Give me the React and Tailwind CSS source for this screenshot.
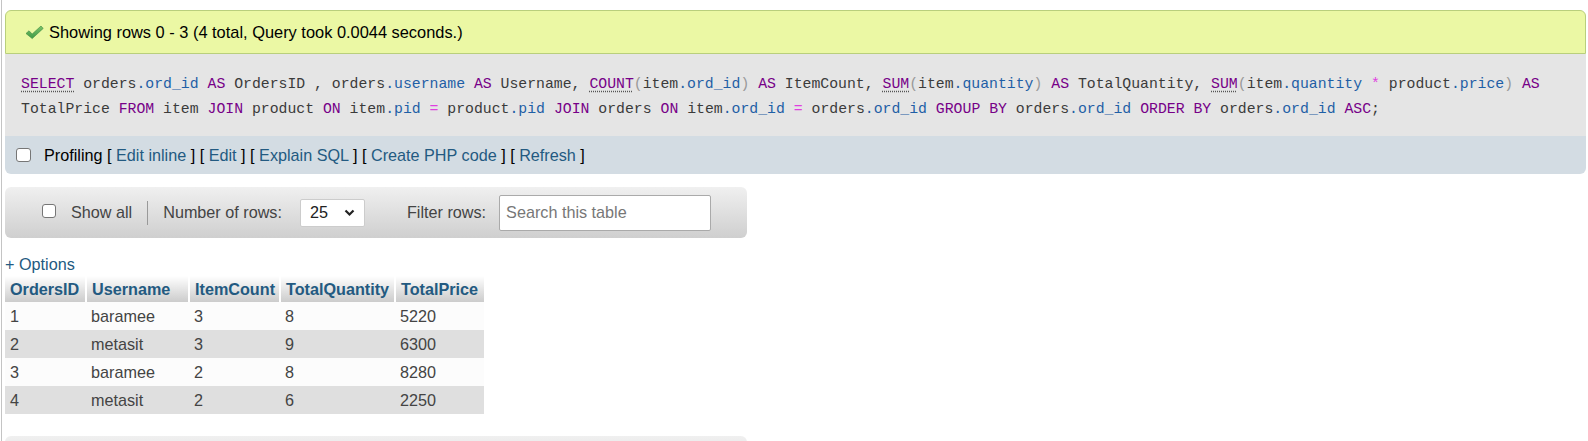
import React from "react";

const K = ({ children, u }) => (
  <span className={"text-[#770088] " + (u ? "underline decoration-dotted decoration-[#555] underline-offset-[3px]" : "")}>
    {children}
  </span>
);
const V = ({ children }) => <span className="text-[#1f5fa6]">{children}</span>;
const P = ({ children }) => <span className="text-[#999]">{children}</span>;
const O = ({ children }) => <span className="text-[#e040e0]">{children}</span>;

function CheckIcon() {
  return (
    <svg width="19" height="16" viewBox="0 0 19 16" className="shrink-0">
      <defs>
        <linearGradient id="chk" x1="0" y1="0" x2="0" y2="1">
          <stop offset="0" stopColor="#7cc46a" />
          <stop offset="1" stopColor="#3f9a45" />
        </linearGradient>
      </defs>
      <path d="M1 9.5 L4 6.8 L7.2 10 L16 2 L18.2 4.4 L7.2 14.6 Z" fill="url(#chk)" stroke="#3b8a40" strokeWidth="0.6" />
    </svg>
  );
}

function Box({ w = 14 }) {
  return <span className="inline-block h-[14px] rounded-[3px] border border-[#767676] bg-white shrink-0" style={{ width: w }} />;
}

const rows = [
  ["1", "baramee", "3", "8", "5220"],
  ["2", "metasit", "3", "9", "6300"],
  ["3", "baramee", "2", "8", "8280"],
  ["4", "metasit", "2", "6", "2250"],
];
const heads = ["OrdersID", "Username", "ItemCount", "TotalQuantity", "TotalPrice"];
const widths = ["w-[81px]", "w-[103px]", "w-[91px]", "w-[115px]", "w-[89px]"];

export default function App() {
  return (
    <div className="min-h-screen bg-white ml-px border-l border-[#c4c4c4] pl-[3px] pt-[10px] text-[16.2px] text-[#333] font-['Liberation_Sans',Arial,sans-serif]">
      {/* result message + query */}
      <div className="mr-[2px]">
        <div className="h-[44px] flex items-center gap-[5px] pl-[19px] bg-[#ebf8a4] border border-[#b9cf7c] rounded-t-[6px] text-black text-[16.4px]">
          <CheckIcon />
          <span>Showing rows 0 - 3 (4 total, Query took 0.0044 seconds.)</span>
        </div>
        <div className="bg-[#e5e5e5] h-[82px] pl-[16px] pt-[18px] font-['Liberation_Mono',monospace] text-[14.8px] leading-[25px] text-[#3b3b3b] whitespace-nowrap">
          <div>
            <K u>SELECT</K> orders<V>.ord_id</V> <K>AS</K> OrdersID , orders<V>.username</V> <K>AS</K> Username,{" "}
            <K u>COUNT</K><P>(</P>item<V>.ord_id</V><P>)</P> <K>AS</K> ItemCount, <K u>SUM</K><P>(</P>item<V>.quantity</V><P>)</P>{" "}
            <K>AS</K> TotalQuantity, <K u>SUM</K><P>(</P>item<V>.quantity</V> <O>*</O> product<V>.price</V><P>)</P> <K>AS</K>
          </div>
          <div>
            TotalPrice <K>FROM</K> item <K>JOIN</K> product <K>ON</K> item<V>.pid</V> <O>=</O> product<V>.pid</V> <K>JOIN</K> orders{" "}
            <K>ON</K> item<V>.ord_id</V> <O>=</O> orders<V>.ord_id</V> <K>GROUP BY</K> orders<V>.ord_id</V> <K>ORDER BY</K>{" "}
            orders<V>.ord_id</V> <K>ASC</K>;
          </div>
        </div>
        <div className="h-[38px] flex items-center pl-[11px] bg-[#d3dce3] rounded-b-[6px] text-black">
          <Box w={15} />
          <span className="ml-[13px]">
            Profiling [ <span className="text-[#235a81]">Edit inline</span> ] [ <span className="text-[#235a81]">Edit</span> ] [{" "}
            <span className="text-[#235a81]">Explain SQL</span> ] [ <span className="text-[#235a81]">Create PHP code</span> ] [{" "}
            <span className="text-[#235a81]">Refresh</span> ]
          </span>
        </div>
      </div>

      {/* navigation */}
      <div className="mt-[13px] w-[742px] h-[51px] rounded-[6px] bg-gradient-to-b from-[#f0f0f0] to-[#cfcfcf] flex items-center text-[#444]">
        <span className="ml-[37px]"><Box w={14} /></span>
        <span className="ml-[15px]">Show all</span>
        <span className="ml-[15px] w-px h-[24px] bg-[#999]" />
        <span className="ml-[15px]">Number of rows:</span>
        <div className="ml-[18px] w-[65px] h-[28px] bg-white border border-[#ccc] rounded-[2px] flex items-center justify-between pl-[9px] pr-[9px] text-[#222]">
          <span>25</span>
          <svg width="11" height="8" viewBox="0 0 11 8">
            <path d="M1.5 1.5 L5.5 5.5 L9.5 1.5" fill="none" stroke="#222" strokeWidth="2.2" />
          </svg>
        </div>
        <span className="ml-[42px]">Filter rows:</span>
        <div className="ml-[13px] w-[212px] h-[36px] bg-white border border-[#aaa] rounded-[2px] flex items-center pl-[6px] text-[#777]">
          Search this table
        </div>
      </div>

      {/* options */}
      <div className="mt-[15px] h-[22px] leading-[22px] text-[#235a81]">+ Options</div>

      <table className="mt-[1px] border-collapse text-left">
        <thead>
          <tr className="h-[26px]">
            {heads.map((h, i) => (
              <th
                key={h}
                className={`${widths[i]} p-0 pl-[5px] font-bold text-[#235a81] bg-gradient-to-b from-white to-[#cccccc] ${i < 4 ? "border-r-2 border-white" : ""}`}
              >
                {h}
              </th>
            ))}
          </tr>
        </thead>
        <tbody>
          {rows.map((r, ri) => (
            <tr key={ri} className={"h-[28px] " + (ri % 2 ? "bg-[#dfdfdf]" : "bg-[#fcfcfc]")}>
              {r.map((c, ci) => (
                <td key={ci} className="p-0 pl-[5px] text-[#444]">
                  {c}
                </td>
              ))}
            </tr>
          ))}
        </tbody>
      </table>

      {/* bottom navigation */}
      <div className="mt-[22px] w-[742px] h-[51px] rounded-[6px] bg-gradient-to-b from-[#f0f0f0] to-[#cfcfcf]" />
    </div>
  );
}
